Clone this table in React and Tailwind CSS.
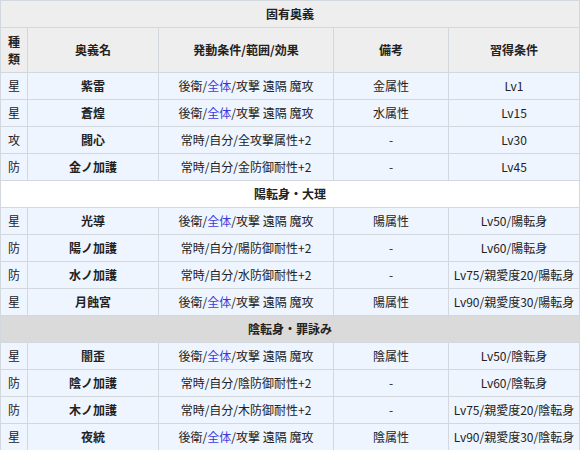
const rows = [
  { type: 'section', label: '固有奥義', bg: 'bg-[#eeeeee]' },
  { type: 'head' },
  { kind: '星', name: '紫雷', eff: 'a', note: '金属性', cond: 'Lv1' },
  { kind: '星', name: '蒼煌', eff: 'a', note: '水属性', cond: 'Lv15' },
  { kind: '攻', name: '闘心', eff: '常時/自分/全攻撃属性+2', note: '-', cond: 'Lv30' },
  { kind: '防', name: '金ノ加護', eff: '常時/自分/金防御耐性+2', note: '-', cond: 'Lv45' },
  { type: 'section', label: '陽転身・大理', bg: 'bg-white' },
  { kind: '星', name: '光導', eff: 'a', note: '陽属性', cond: 'Lv50/陽転身' },
  { kind: '防', name: '陽ノ加護', eff: '常時/自分/陽防御耐性+2', note: '-', cond: 'Lv60/陽転身' },
  { kind: '防', name: '水ノ加護', eff: '常時/自分/水防御耐性+2', note: '-', cond: 'Lv75/親愛度20/陽転身' },
  { kind: '星', name: '月蝕宮', eff: 'a', note: '陽属性', cond: 'Lv90/親愛度30/陽転身' },
  { type: 'section', label: '陰転身・罪詠み', bg: 'bg-[#dadada]' },
  { kind: '星', name: '闇歪', eff: 'a', note: '陰属性', cond: 'Lv50/陰転身' },
  { kind: '防', name: '陰ノ加護', eff: '常時/自分/陰防御耐性+2', note: '-', cond: 'Lv60/陰転身' },
  { kind: '防', name: '木ノ加護', eff: '常時/自分/木防御耐性+2', note: '-', cond: 'Lv75/親愛度20/陰転身' },
  { kind: '星', name: '夜統', eff: 'a', note: '陰属性', cond: 'Lv90/親愛度30/陰転身' },
]

const cell = 'border border-[#d3d7de] text-center align-middle p-0'

function Effect({ eff }) {
  if (eff !== 'a') return eff
  return (
    <>
      後衛/<span className="text-[#3b3bdc]">全体</span>/攻撃 遠隔 魔攻
    </>
  )
}

export default function App() {
  return (
    <div className="w-[580px] h-[450px] overflow-hidden bg-white font-['Noto_Sans_CJK_JP','Noto_Sans',sans-serif] text-[12px] text-[#222]">
      <table className="w-[579px] table-fixed border-collapse">
        <colgroup>
          <col className="w-[27px]" />
          <col className="w-[131px]" />
          <col className="w-[175px]" />
          <col className="w-[115px]" />
          <col className="w-[131px]" />
        </colgroup>
        <tbody>
          {rows.map((r, i) => {
            if (r.type === 'section')
              return (
                <tr key={i} className="h-[27px]">
                  <td colSpan={5} className={`${cell} ${r.bg} font-bold`}>
                    {r.label}
                  </td>
                </tr>
              )
            if (r.type === 'head')
              return (
                <tr key={i} className="h-[45px] bg-[#eeeeee] font-bold">
                  <td className={`${cell} leading-[17px]`}>
                    種<br />類
                  </td>
                  <td className={cell}>奥義名</td>
                  <td className={cell}>発動条件/範囲/効果</td>
                  <td className={cell}>備考</td>
                  <td className={cell}>習得条件</td>
                </tr>
              )
            return (
              <tr key={i} className="h-[27px] bg-[#eef5ff]">
                <td className={cell}>{r.kind}</td>
                <td className={`${cell} font-bold`}>{r.name}</td>
                <td className={cell}>
                  <Effect eff={r.eff} />
                </td>
                <td className={cell}>{r.note}</td>
                <td className={cell}>{r.cond}</td>
              </tr>
            )
          })}
        </tbody>
      </table>
    </div>
  )
}
